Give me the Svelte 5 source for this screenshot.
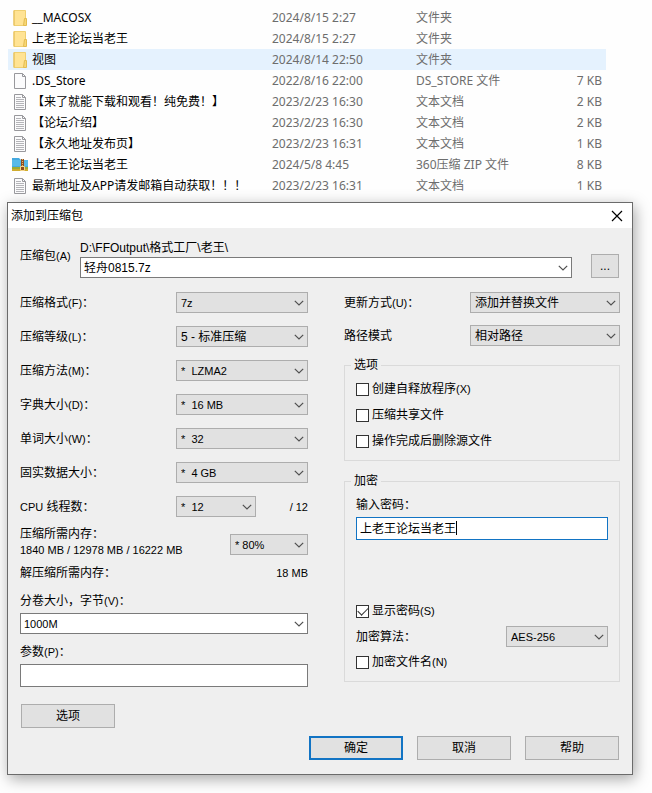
<script lang="ts">
  // File list
  const files = [
    { icon: 'folder', name: '__MACOSX', date: '2024/8/15 2:27', type: '文件夹', size: '' },
    { icon: 'folder', name: '上老王论坛当老王', date: '2024/8/15 2:27', type: '文件夹', size: '' },
    { icon: 'folder', name: '视图', date: '2024/8/14 22:50', type: '文件夹', size: '' },
    { icon: 'file', name: '.DS_Store', date: '2022/8/16 22:00', type: 'DS_STORE 文件', size: '7 KB' },
    { icon: 'text', name: '【来了就能下载和观看！纯免费！】', date: '2023/2/23 16:30', type: '文本文档', size: '2 KB' },
    { icon: 'text', name: '【论坛介绍】', date: '2023/2/23 16:30', type: '文本文档', size: '2 KB' },
    { icon: 'text', name: '【永久地址发布页】', date: '2023/2/23 16:31', type: '文本文档', size: '1 KB' },
    { icon: 'zip', name: '上老王论坛当老王', date: '2024/5/8 4:45', type: '360压缩 ZIP 文件', size: '8 KB' },
    { icon: 'text', name: '最新地址及APP请发邮箱自动获取！！！', date: '2023/2/23 16:31', type: '文本文档', size: '1 KB' }
  ];
  let hovered = $state(2);

  // Compression settings
  const settings = [
    { id: 'format', label: '压缩格式', key: '(F)', value: '7z' },
    { id: 'level', label: '压缩等级', key: '(L)', value: '5 - 标准压缩' },
    { id: 'method', label: '压缩方法', key: '(M)', value: '*\u00a0 LZMA2' },
    { id: 'dictionary', label: '字典大小', key: '(D)', value: '*\u00a0 16 MB' },
    { id: 'word', label: '单词大小', key: '(W)', value: '*\u00a0 32' },
    { id: 'solid', label: '固实数据大小', key: '', value: '*\u00a0 4 GB' }
  ];

  // Form state
  let archiveName = $state('轻舟0815.7z');
  let volumeSize = $state('1000M');
  let parameters = $state('');
  let password = $state('上老王论坛当老王');
  let createSfx = $state(false);
  let compressShared = $state(false);
  let deleteAfter = $state(false);
  let showPassword = $state(true);
  let encryptNames = $state(false);
</script>

{#snippet chevron()}
  <svg class="chevron" width="10" height="6" viewBox="0 0 10 6" aria-hidden="true">
    <path d="M0.8 0.8L5 5L9.2 0.8" fill="none" stroke="#505050" stroke-width="1.2" />
  </svg>
{/snippet}

{#snippet dropdown(id: string, value: string, latin: boolean)}
  <div class="select">
    <select {id} class:latin>
      <option>{value}</option>
    </select>
    {@render chevron()}
  </div>
{/snippet}

{#snippet fileIcon(kind: string)}
  <svg class="file-icon" width="16" height="16" viewBox="0 0 16 16" aria-hidden="true">
    {#if kind === 'folder'}
      <path d="M2 0.5H13.5V15.5H2Z" fill="#ffe394" stroke="#efcf70" />
      <path d="M2 0.5V15.5" stroke="#e5bd55" />
      <path d="M12.5 8.5H14.5V15.5H11.5Z" fill="#f8d775" stroke="#e3bc50" />
    {:else if kind === 'zip'}
      <path d="M0 1H7L9 3H16V11H0Z" fill="#46a9df" />
      <path d="M0 3H16V9H0Z" fill="#58bae9" />
      <path d="M0 10H16V14H0Z" fill="#9cab37" />
      <path d="M0 12H16V14H0Z" fill="#d0ad2f" />
      <path d="M9 2H12V13H9Z" fill="#91501f" />
      <path d="M10.5 2V9" stroke="#e7b66d" stroke-dasharray="1 1" />
      <path d="M8.5 9.5H12.5V13.5H8.5Z" fill="#8c4b1c" stroke="#f4d58a" />
    {:else}
      <path d="M2.5 0.5H10.5L13.5 3.5V15.5H2.5Z" fill="#fbfbfc" stroke="#98989c" />
      <path d="M10.5 0.5V3.5H13.5" fill="none" stroke="#98989c" />
      {#if kind === 'text'}
        <path d="M4 3.5H9M4 5.5H12M4 7.5H12M4 9.5H12M4 11.5H12M4 13.5H12" stroke="#b4b4b8" />
      {/if}
    {/if}
  </svg>
{/snippet}

<main>
  <table class="files">
    <colgroup>
      <col />
      <col class="col-date" />
      <col class="col-type" />
      <col class="col-size" />
    </colgroup>
    <tbody>
      {#each files as file, index}
        <tr class:hovered={hovered === index} onmouseenter={() => (hovered = index)}>
          <td class="name">
            <div class="name-cell">
              {@render fileIcon(file.icon)}
              <span>{file.name}</span>
            </div>
          </td>
          <td>{file.date}</td>
          <td>{file.type}</td>
          <td class="size">{file.size}</td>
        </tr>
      {/each}
    </tbody>
  </table>

  <div class="dialog" role="dialog" aria-labelledby="dialog-title">
    <header class="title-bar">
      <span id="dialog-title">添加到压缩包</span>
      <button type="button" class="close-button" aria-label="关闭">
        <svg width="12" height="12" viewBox="0 0 12 12">
          <path d="M1 1L11 11M11 1L1 11" stroke="#000" stroke-width="1.2" />
        </svg>
      </button>
    </header>

    <form class="dialog-body" onsubmit={(e) => e.preventDefault()}>
      <div class="archive">
        <label for="archive">压缩包<span class="latin">(A)</span></label>
        <div class="archive-path">
          <span>D:\FFOutput\格式工厂\老王\</span>
          <div class="combo">
            <input id="archive" type="text" bind:value={archiveName} />
            <button type="button" aria-label="历史记录">{@render chevron()}</button>
          </div>
        </div>
        <button type="button" class="button browse">...</button>
      </div>

      <div class="columns">
        <div class="left">
          <div class="settings">
            {#each settings as item}
              <div class="row">
                <label for={item.id}>{item.label}<span class="latin">{item.key}</span>：</label>
                {@render dropdown(item.id, item.value, item.id !== 'level')}
              </div>
            {/each}
            <div class="row threads">
              <label for="threads"><span class="latin">CPU</span> 线程数：</label>
              {@render dropdown('threads', '*\u00a0 12', true)}
              <span class="latin total">/ 12</span>
            </div>
          </div>

          <div class="memory">
            <label for="memory">
              压缩所需内存：<br /><span class="latin">1840 MB / 12978 MB / 16222 MB</span>
            </label>
            {@render dropdown('memory', '* 80%', true)}
          </div>
          <div class="unpack-memory">
            <span>解压缩所需内存：</span>
            <span class="latin">18 MB</span>
          </div>

          <div class="field">
            <label for="volume">分卷大小，字节<span class="latin">(V)</span>：</label>
            <div class="combo">
              <input id="volume" class="latin" type="text" bind:value={volumeSize} />
              <button type="button" aria-label="分卷大小列表">{@render chevron()}</button>
            </div>
          </div>
          <div class="field">
            <label for="parameters">参数<span class="latin">(P)</span>：</label>
            <input id="parameters" class="text-box" type="text" bind:value={parameters} />
          </div>
          <button type="button" class="button options">选项</button>
        </div>

        <div class="right">
          <div class="modes">
            <div class="row">
              <label for="update">更新方式<span class="latin">(U)</span>：</label>
              {@render dropdown('update', '添加并替换文件', false)}
            </div>
            <div class="row">
              <label for="path-mode">路径模式</label>
              {@render dropdown('path-mode', '相对路径', false)}
            </div>
          </div>

          <fieldset class="group group-options">
            <legend>选项</legend>
            <label class="check">
              <input type="checkbox" bind:checked={createSfx} />
              <span>创建自释放程序<span class="latin">(X)</span></span>
            </label>
            <label class="check">
              <input type="checkbox" bind:checked={compressShared} />
              <span>压缩共享文件</span>
            </label>
            <label class="check">
              <input type="checkbox" bind:checked={deleteAfter} />
              <span>操作完成后删除源文件</span>
            </label>
          </fieldset>

          <fieldset class="group group-encryption">
            <legend>加密</legend>
            <label for="password">输入密码：</label>
            <div class="password">
              <input
                id="password"
                class="text-box"
                type={showPassword ? 'text' : 'password'}
                bind:value={password}
              />
              <span class="caret"></span>
            </div>
            <label class="check">
              <input type="checkbox" bind:checked={showPassword} />
              <span>显示密码<span class="latin">(S)</span></span>
            </label>
            <div class="row algorithm">
              <label for="algorithm">加密算法：</label>
              {@render dropdown('algorithm', 'AES-256', true)}
            </div>
            <label class="check">
              <input type="checkbox" bind:checked={encryptNames} />
              <span>加密文件名<span class="latin">(N)</span></span>
            </label>
          </fieldset>
        </div>
      </div>

      <footer class="actions">
        <button type="submit" class="button primary">确定</button>
        <button type="button" class="button">取消</button>
        <button type="button" class="button">帮助</button>
      </footer>
    </form>
  </div>
</main>

<style>
  :global(body) {
    background-color: #fefefe;
  }

  main {
    padding: 7px 19px 18px 7px;
    font-family: 'Liberation Sans', 'Noto Sans CJK SC', sans-serif;
    font-size: 12px;
    line-height: 16px;
    color: #000;
  }

  main :global(*) {
    box-sizing: border-box;
  }

  button,
  input,
  select {
    margin: 0;
    font-family: inherit;
    font-size: inherit;
    line-height: inherit;
    color: inherit;
    border-radius: 0;
    outline: none;
  }

  .latin {
    font-size: 11px;
  }

  /* Keeps mixed-size lines at the height of the Chinese text */
  label .latin {
    line-height: 1;
  }

  /* File list */
  .files {
    width: calc(100% - 28px);
    margin-left: 1px;
    table-layout: fixed;
    border-collapse: collapse;
    font-family: 'Noto Sans', 'Noto Sans CJK SC', sans-serif;
    color: #6d6d6d;
  }

  .col-date {
    width: 144px;
  }

  .col-type {
    width: 120px;
  }

  .col-size {
    width: 70px;
  }

  .files td {
    height: 21px;
    padding: 0;
    white-space: nowrap;
  }

  .files .name {
    color: #000;
  }

  .files .size {
    padding-right: 4px;
    text-align: right;
  }

  .name-cell {
    display: flex;
    align-items: center;
    gap: 4px;
    padding-left: 4px;
  }

  .file-icon {
    flex: none;
  }

  .hovered {
    background-color: #e5f2fe;
  }

  /* Dialog */
  .dialog {
    margin-top: 6px;
    border: 1px solid #6b6b6b;
    background-color: #efefef;
    box-shadow: 2px 4px 14px rgba(0, 0, 0, 0.35);
  }

  .title-bar {
    display: flex;
    justify-content: space-between;
    align-items: center;
    height: 25px;
    padding: 0 9px 0 3px;
    background-color: #fff;
  }

  .close-button {
    display: flex;
    padding: 0;
    border: none;
    background: none;
  }

  .dialog-body {
    padding: 12px 12px 14px;
  }

  label {
    white-space: nowrap;
  }

  .archive {
    display: flex;
    align-items: flex-end;
  }

  .archive > label {
    width: 60px;
    padding-bottom: 14px;
  }

  .archive-path {
    flex: 1;
    margin-right: 19px;
  }

  .archive-path > span {
    display: block;
    margin-bottom: 1px;
  }

  .columns {
    display: grid;
    grid-template-columns: 288fr 276fr;
    gap: 36px;
    margin-top: 14px;
  }

  .left {
    display: flex;
    flex-direction: column;
  }

  .row {
    display: flex;
    align-items: center;
    justify-content: space-between;
  }

  .settings,
  .modes {
    display: flex;
    flex-direction: column;
    gap: 13px;
  }

  .modes {
    gap: 12px;
  }

  .settings .select {
    width: 132px;
  }

  .settings .threads .select {
    width: 80px;
  }

  .threads label {
    width: 156px;
  }

  .total {
    flex: 1;
    text-align: right;
  }

  .modes .select {
    width: 150px;
  }

  .memory {
    display: flex;
    justify-content: space-between;
    align-items: flex-start;
    margin-top: 9px;
  }

  .memory .select {
    width: 78px;
    margin-top: 8px;
  }

  .unpack-memory {
    display: flex;
    justify-content: space-between;
    margin-top: 7px;
  }

  .field {
    display: flex;
    flex-direction: column;
    gap: 4px;
    margin-top: 10px;
  }

  .unpack-memory + .field {
    margin-top: 12px;
  }

  /* Controls */
  .select {
    position: relative;
  }

  .select select {
    display: block;
    width: 100%;
    height: 21px;
    padding: 0 20px 0 4px;
    border: 1px solid #adadad;
    background-color: #e1e1e1;
    appearance: none;
  }

  .select .chevron {
    position: absolute;
    top: 8px;
    right: 4px;
    pointer-events: none;
  }

  .combo {
    display: flex;
    height: 21px;
    border: 1px solid #7a7a7a;
    background-color: #fff;
  }

  .combo input {
    flex: 1;
    min-width: 0;
    padding: 0 3px;
    border: none;
    background: none;
  }

  .combo button {
    display: flex;
    align-items: center;
    padding: 0 3px;
    border: none;
    background: none;
  }

  .text-box {
    width: 100%;
    height: 23px;
    padding: 0 3px;
    border: 1px solid #7a7a7a;
    background-color: #fff;
  }

  .button {
    width: 94px;
    height: 24px;
    padding: 0;
    border: 1px solid #adadad;
    background-color: #e1e1e1;
  }

  .browse {
    width: 28px;
    margin-right: 1px;
  }

  .primary {
    border: 2px solid #1274c4;
  }

  .options {
    margin: 17px 0 0 1px;
  }

  .check {
    display: flex;
    align-items: center;
    gap: 3px;
  }

  .check input {
    display: flex;
    justify-content: center;
    width: 13px;
    height: 13px;
    border: 1px solid #333;
    background-color: #fff;
    appearance: none;
  }

  .check input:checked::before {
    content: '';
    width: 9px;
    height: 5px;
    margin-top: 1px;
    border: solid #333;
    border-width: 0 0 1px 1px;
    transform: rotate(-45deg);
  }

  /* Groups */
  .group {
    display: flex;
    flex-direction: column;
    min-width: 0;
    margin: 0;
    padding: 8px 11px 11px;
    border: 1px solid #dadada;
  }

  .group legend {
    margin-left: -5px;
    padding: 0 3px;
  }

  .group-options {
    gap: 10px;
    margin-top: 11px;
  }

  .group-encryption {
    margin-top: 12px;
  }

  .password {
    position: relative;
    margin: 4px 0 63px;
  }

  .password .text-box {
    display: block;
    padding-bottom: 2px;
    border-color: #1274c4;
  }

  .caret {
    position: absolute;
    top: 4px;
    left: calc(8em + 4px);
    width: 1px;
    height: 14px;
    background-color: #000;
  }

  .algorithm {
    margin: 7px 0;
  }

  .algorithm .select {
    width: 102px;
  }

  .actions {
    display: flex;
    justify-content: flex-end;
    gap: 14px;
    margin-top: 8px;
    padding-right: 1px;
  }
</style>
